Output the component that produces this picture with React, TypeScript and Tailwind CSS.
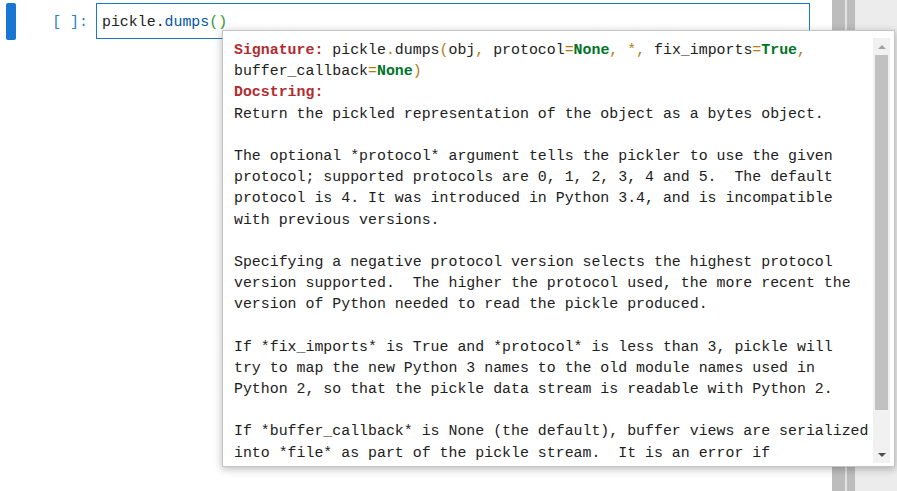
import React from "react";

const Y = ({ children }: { children: React.ReactNode }) => (
  <span className="text-[#b27d12]">{children}</span>
);
const G = ({ children }: { children: React.ReactNode }) => (
  <span className="text-[#007427] font-bold">{children}</span>
);
const R = ({ children }: { children: React.ReactNode }) => (
  <span className="text-[#b22b31] font-bold">{children}</span>
);

const docLines = [
  "Return the pickled representation of the object as a bytes object.",
  "",
  "The optional *protocol* argument tells the pickler to use the given",
  "protocol; supported protocols are 0, 1, 2, 3, 4 and 5.  The default",
  "protocol is 4. It was introduced in Python 3.4, and is incompatible",
  "with previous versions.",
  "",
  "Specifying a negative protocol version selects the highest protocol",
  "version supported.  The higher the protocol used, the more recent the",
  "version of Python needed to read the pickle produced.",
  "",
  "If *fix_imports* is True and *protocol* is less than 3, pickle will",
  "try to map the new Python 3 names to the old module names used in",
  "Python 2, so that the pickle data stream is readable with Python 2.",
  "",
  "If *buffer_callback* is None (the default), buffer views are serialized",
  "into *file* as part of the pickle stream.  It is an error if",
];

export default function App() {
  const mono = { fontFamily: '"Liberation Mono", "DejaVu Sans Mono", monospace' };
  return (
    <div className="relative w-[897px] h-[491px] bg-white overflow-hidden flex" style={mono}>
      {/* main notebook area */}
      <div className="w-[832px] h-full bg-white">
        <div className="flex items-start pt-[3px]">
          <div className="ml-[6px] w-[10px] h-[37px] rounded-[2px] bg-[#1976d2]" />
          <div className="w-[80px] pr-[8px] pt-[9px] text-right text-[14.9px] leading-[21.2px] text-[#307fc1] whitespace-pre">
            [ ]:
          </div>
          <div className="w-[714px] h-[36px] border border-[#1976d2] bg-white pl-[5px] pt-[8px] text-[14.9px] leading-[21.2px] whitespace-pre">
            <span className="text-[#212121]">pickle</span>
            <span className="text-[#212121]">.</span>
            <span className="text-[#0055aa]">dumps</span>
            <span className="text-[#2a9a2a]">()</span>
          </div>
        </div>
      </div>
      {/* right side bars */}
      <div className="w-[13px] h-full bg-[#bdbdbd]" />
      <div className="w-[2px] h-full bg-[#e3e3e3]" />
      <div className="w-[8px] h-full bg-[#bdbdbd]" />
      <div className="flex-1 h-full bg-[#ececec]" />

      {/* tooltip */}
      <div className="absolute left-[222px] top-[30px] w-[673px] h-[437px] bg-white border border-[#c4c4c4] shadow-[0_2px_8px_rgba(0,0,0,0.28)] flex pt-[7px] pr-[4px] pb-[3px]">
        <div className="flex-1 overflow-hidden pl-[11px] pt-[2px] text-[14.9px] leading-[21.2px] text-[#212121] whitespace-pre">
          <div>
            <R>Signature:</R> pickle<Y>.</Y>dumps<Y>(</Y>obj<Y>,</Y> protocol<Y>=</Y>
            <G>None</G>
            <Y>,</Y> <Y>*</Y>
            <Y>,</Y> fix_imports<Y>=</Y>
            <G>True</G>
            <Y>,</Y>
          </div>
          <div>
            buffer_callback<Y>=</Y>
            <G>None</G>
            <Y>)</Y>
          </div>
          <div>
            <R>Docstring:</R>
          </div>
          {docLines.map((l, i) => (
            <div key={i} className="h-[21.2px]">
              {l}
            </div>
          ))}
        </div>
        {/* scrollbar */}
        <div className="w-[17px] h-full bg-[#f1f1f1] flex flex-col items-center">
          <div className="h-[17px] w-full flex items-center justify-center">
            <div className="w-0 h-0 border-l-[4px] border-r-[4px] border-b-[4px] border-l-transparent border-r-transparent border-b-[#a3a3a3]" />
          </div>
          <div className="w-[13px] h-[355px] bg-[#c1c1c1]" />
          <div className="flex-1" />
          <div className="h-[17px] w-full flex items-center justify-center">
            <div className="w-0 h-0 border-l-[4px] border-r-[4px] border-t-[4px] border-l-transparent border-r-transparent border-t-[#505050]" />
          </div>
        </div>
      </div>
    </div>
  );
}
